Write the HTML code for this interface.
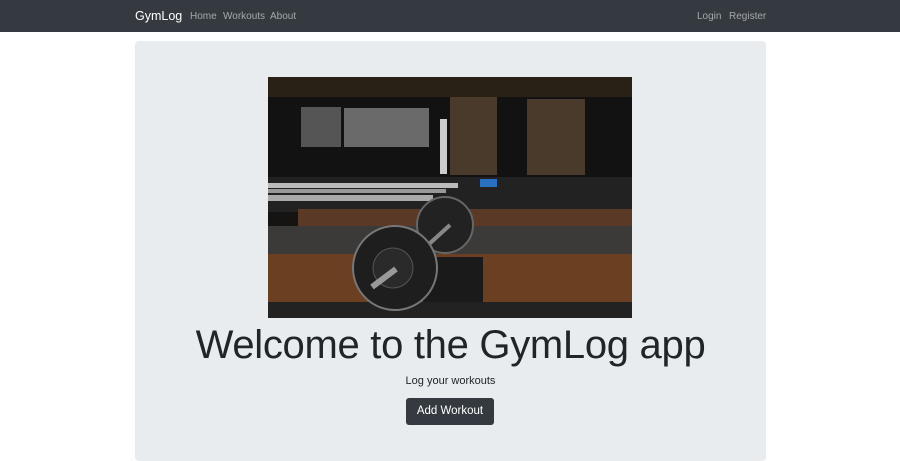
<!DOCTYPE html>
<html><head><style>
*{margin:0;padding:0;box-sizing:border-box}
body{width:900px;height:446px;overflow:hidden;background:#fff;font-family:"Segoe UI","Liberation Sans",sans-serif}
.nav{height:32px;background:#343a40;position:relative}
.nav span{position:absolute;top:11px;font-size:10px;line-height:12px;color:rgba(255,255,255,.55)}
.brand{color:#fff!important;font-size:12.5px!important;top:9px!important;line-height:15px!important}
.jumbo{position:absolute;left:135px;top:41px;width:631px;height:420px;background:#e9ecef;border-radius:4px}
h1{position:absolute;left:0;width:100%;top:282px;line-height:44px;text-align:center;font-weight:300;font-size:40px;color:#212529;font-family:"Liberation Sans",sans-serif;letter-spacing:-0.3px}
.sub{position:absolute;width:100%;top:334px;text-align:center;font-size:11px;color:#212529}
.btn{position:absolute;left:271px;top:357px;width:88px;height:27px;background:#343a40;color:#fff;border-radius:3px;font-size:11.5px;text-align:center;line-height:27px}
</style></head><body>
<div class="nav">
<span class="brand" style="left:135px">GymLog</span>
<span style="left:190px">Home</span>
<span style="left:223px">Workouts</span>
<span style="left:270px">About</span>
<span style="left:697px">Login</span>
<span style="left:729px">Register</span>
</div>
<div class="jumbo">
<svg style="position:absolute;left:133px;top:36px" width="364" height="241" viewBox="0 0 364 241">
<rect width="364" height="241" fill="#151413"/>
<rect width="364" height="20" fill="#2a2116"/>
<rect x="0" y="20" width="364" height="80" fill="#121212"/>
<rect x="33" y="30" width="40" height="40" fill="#555"/>
<rect x="76" y="31" width="85" height="39" fill="#6a6a6a"/>
<rect x="182" y="20" width="47" height="78" fill="#4a3a2c"/>
<rect x="259" y="22" width="58" height="76" fill="#4a3a2c"/>
<rect x="172" y="42" width="7" height="55" fill="#ccc"/>
<rect x="0" y="100" width="364" height="35" fill="#222"/>
<rect x="0" y="106" width="190" height="5" fill="#bbb"/>
<rect x="0" y="112" width="178" height="4" fill="#999"/>
<rect x="0" y="118" width="165" height="6" fill="#aaa"/>
<rect x="212" y="102" width="17" height="8" fill="#2a70c0"/>
<rect x="30" y="132" width="334" height="17" fill="#5a3a26"/>
<rect x="0" y="149" width="364" height="28" fill="#3b3a39"/>
<rect x="0" y="177" width="364" height="48" fill="#6a3f22"/>
<rect x="155" y="180" width="60" height="45" fill="#1a1a1a"/>
<rect x="0" y="225" width="364" height="16" fill="#222"/>
<circle cx="177" cy="148" r="28" fill="#222" stroke="#666" stroke-width="2"/>
<line x1="160" y1="168" x2="182" y2="148" stroke="#888" stroke-width="4"/>
<circle cx="127" cy="191" r="42" fill="#1e1e1e" stroke="#777" stroke-width="2"/>
<circle cx="125" cy="191" r="20" fill="#2a2a2a" stroke="#555"/>
<line x1="104" y1="210" x2="128" y2="192" stroke="#999" stroke-width="6"/>
</svg>
<h1>Welcome to the GymLog app</h1>
<div class="sub">Log your workouts</div>
<div class="btn">Add Workout</div>
</div>
</body></html>
